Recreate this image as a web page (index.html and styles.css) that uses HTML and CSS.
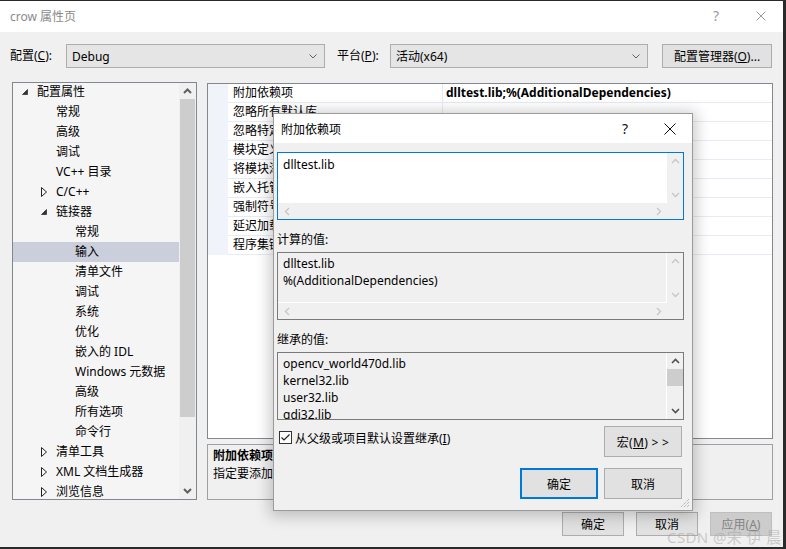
FILE: index.html
```html
<!DOCTYPE html>
<html lang="zh-CN">
<head>
<meta charset="utf-8">
<title>crow 属性页</title>
<link rel="stylesheet" href="styles.css">
</head>
<body>
<div class="window">
  <div class="titlebar">
    <span class="title">crow 属性页</span>
    <span class="tb-btn tb-help">?</span>
    <span class="tb-btn tb-close"><svg width="10" height="10" viewBox="0 0 10 10"><path d="M0.5 0.5L9.5 9.5M9.5 0.5L0.5 9.5" stroke="#9a9a9a" stroke-width="1" fill="none"/></svg></span>
  </div>

  <div class="toolbar">
    <span class="tlabel lbl-config">配置(<u>C</u>):</span>
    <div class="select sel-config"><span class="sel-text">Debug</span><svg class="chev" width="8" height="5" viewBox="0 0 8 5"><path d="M0.5 0.5L4 4L7.5 0.5" stroke="#606060" fill="none"/></svg></div>
    <span class="tlabel lbl-plat">平台(<u>P</u>):</span>
    <div class="select sel-plat"><span class="sel-text">活动(x64)</span><svg class="chev" width="8" height="5" viewBox="0 0 8 5"><path d="M0.5 0.5L4 4L7.5 0.5" stroke="#606060" fill="none"/></svg></div>
    <button class="btn btn-mgr">配置管理器(<u>O</u>)...</button>
  </div>

  <div class="main">
    <div class="tree">
      <div class="tree-list">
        <div class="trow l0"><span class="tw"><svg width="6" height="6" viewBox="0 0 6 6"><path d="M5.5 0.5V5.5H0.5Z" fill="#333" stroke="#333" stroke-width="0.8"/></svg></span>配置属性</div>
        <div class="trow l1"><span class="tw"></span>常规</div>
        <div class="trow l1"><span class="tw"></span>高级</div>
        <div class="trow l1"><span class="tw"></span>调试</div>
        <div class="trow l1"><span class="tw"></span>VC++ 目录</div>
        <div class="trow l1"><span class="tw"><svg width="6" height="10" viewBox="0 0 6 10"><path d="M0.5 0.5L5.5 5L0.5 9.5Z" fill="none" stroke="#222" stroke-width="1"/></svg></span>C/C++</div>
        <div class="trow l1"><span class="tw"><svg width="6" height="6" viewBox="0 0 6 6"><path d="M5.5 0.5V5.5H0.5Z" fill="#333" stroke="#333" stroke-width="0.8"/></svg></span>链接器</div>
        <div class="trow l2"><span class="tw"></span>常规</div>
        <div class="trow l2 selected"><span class="tw"></span>输入</div>
        <div class="trow l2"><span class="tw"></span>清单文件</div>
        <div class="trow l2"><span class="tw"></span>调试</div>
        <div class="trow l2"><span class="tw"></span>系统</div>
        <div class="trow l2"><span class="tw"></span>优化</div>
        <div class="trow l2"><span class="tw"></span>嵌入的 IDL</div>
        <div class="trow l2"><span class="tw"></span>Windows 元数据</div>
        <div class="trow l2"><span class="tw"></span>高级</div>
        <div class="trow l2"><span class="tw"></span>所有选项</div>
        <div class="trow l2"><span class="tw"></span>命令行</div>
        <div class="trow l1"><span class="tw"><svg width="6" height="10" viewBox="0 0 6 10"><path d="M0.5 0.5L5.5 5L0.5 9.5Z" fill="none" stroke="#222" stroke-width="1"/></svg></span>清单工具</div>
        <div class="trow l1"><span class="tw"><svg width="6" height="10" viewBox="0 0 6 10"><path d="M0.5 0.5L5.5 5L0.5 9.5Z" fill="none" stroke="#222" stroke-width="1"/></svg></span>XML 文档生成器</div>
        <div class="trow l1"><span class="tw"><svg width="6" height="10" viewBox="0 0 6 10"><path d="M0.5 0.5L5.5 5L0.5 9.5Z" fill="none" stroke="#222" stroke-width="1"/></svg></span>浏览信息</div>
      </div>
      <div class="tree-scroll">
        <div class="sarrow"><svg width="9" height="6" viewBox="0 0 9 6"><path d="M1 5L4.5 1.5L8 5" stroke="#606060" stroke-width="2" fill="none"/></svg></div>
        <div class="tthumb"></div>
        <div class="strack"></div>
        <div class="sarrow"><svg width="9" height="6" viewBox="0 0 9 6"><path d="M1 1L4.5 4.5L8 1" stroke="#606060" stroke-width="2" fill="none"/></svg></div>
      </div>
    </div>

    <div class="right">
      <div class="grid">
        <div class="prow"><span class="pind"></span><span class="pname">附加依赖项</span><span class="pval bold">dlltest.lib;%(AdditionalDependencies)</span></div>
        <div class="prow"><span class="pind"></span><span class="pname">忽略所有默认库</span><span class="pval"></span></div>
        <div class="prow"><span class="pind"></span><span class="pname">忽略特定默认库</span><span class="pval"></span></div>
        <div class="prow"><span class="pind"></span><span class="pname">模块定义文件</span><span class="pval"></span></div>
        <div class="prow"><span class="pind"></span><span class="pname">将模块添加到程序集</span><span class="pval"></span></div>
        <div class="prow"><span class="pind"></span><span class="pname">嵌入托管资源文件</span><span class="pval"></span></div>
        <div class="prow"><span class="pind"></span><span class="pname">强制符号引用</span><span class="pval"></span></div>
        <div class="prow"><span class="pind"></span><span class="pname">延迟加载的 DLL</span><span class="pval"></span></div>
        <div class="prow"><span class="pind"></span><span class="pname">程序集链接资源</span><span class="pval"></span></div>
      </div>
      <div class="desc">
        <div class="desc-title">附加依赖项</div>
        <div class="desc-text">指定要添加到链接命令行的附加项。[例如 kernel32.lib]</div>
      </div>
    </div>
  </div>

  <div class="footer">
    <button class="btn fbtn">确定</button>
    <button class="btn fbtn">取消</button>
    <button class="btn fbtn disabled">应用(<u>A</u>)</button>
  </div>
</div>

<div class="dialog">
  <div class="dtitlebar">
    <span class="dtitle">附加依赖项</span>
    <span class="dt-btn dt-help">?</span>
    <span class="dt-btn dt-close"><svg width="12" height="12" viewBox="0 0 12 12"><path d="M0.5 0.5L11.5 11.5M11.5 0.5L0.5 11.5" stroke="#111" stroke-width="1" fill="none"/></svg></span>
  </div>
  <div class="dbody">
    <div class="ebox focused">
      <div class="etext">dlltest.lib</div>
      <div class="vbar">
        <span class="arr"><svg width="9" height="6" viewBox="0 0 9 6"><path d="M1 5L4.5 1.5L8 5" stroke="#c6c6c6" stroke-width="1.3" fill="none"/></svg></span>
        <span class="arr"><svg width="9" height="6" viewBox="0 0 9 6"><path d="M1 1L4.5 4.5L8 1" stroke="#c6c6c6" stroke-width="1.3" fill="none"/></svg></span>
      </div>
      <div class="hbar">
        <span class="arr"><svg width="6" height="9" viewBox="0 0 6 9"><path d="M5 1L1.5 4.5L5 8" stroke="#c6c6c6" stroke-width="1.3" fill="none"/></svg></span>
        <span class="arr"><svg width="6" height="9" viewBox="0 0 6 9"><path d="M1 1L4.5 4.5L1 8" stroke="#c6c6c6" stroke-width="1.3" fill="none"/></svg></span>
      </div>
      <div class="corner"></div>
    </div>

    <div class="dlabel">计算的值:</div>
    <div class="ebox readonly">
      <div class="etext"><div>dlltest.lib</div><div>%(AdditionalDependencies)</div></div>
      <div class="vbar">
        <span class="arr"><svg width="9" height="6" viewBox="0 0 9 6"><path d="M1 5L4.5 1.5L8 5" stroke="#c6c6c6" stroke-width="1.3" fill="none"/></svg></span>
        <span class="arr"><svg width="9" height="6" viewBox="0 0 9 6"><path d="M1 1L4.5 4.5L8 1" stroke="#c6c6c6" stroke-width="1.3" fill="none"/></svg></span>
      </div>
      <div class="hbar">
        <span class="arr"><svg width="6" height="9" viewBox="0 0 6 9"><path d="M5 1L1.5 4.5L5 8" stroke="#c6c6c6" stroke-width="1.3" fill="none"/></svg></span>
        <span class="arr"><svg width="6" height="9" viewBox="0 0 6 9"><path d="M1 1L4.5 4.5L1 8" stroke="#c6c6c6" stroke-width="1.3" fill="none"/></svg></span>
      </div>
      <div class="corner"></div>
    </div>

    <div class="dlabel">继承的值:</div>
    <div class="ebox inherit">
      <div class="etext">
        <div>opencv_world470d.lib</div>
        <div>kernel32.lib</div>
        <div>user32.lib</div>
        <div>gdi32.lib</div>
        <div>winspool.lib</div>
      </div>
      <div class="vbar full">
        <span class="arr"><svg width="9" height="6" viewBox="0 0 9 6"><path d="M1 5L4.5 1.5L8 5" stroke="#505050" stroke-width="1.6" fill="none"/></svg></span>
        <span class="ithumb"></span>
        <span class="itrack"></span>
        <span class="arr"><svg width="9" height="6" viewBox="0 0 9 6"><path d="M1 1L4.5 4.5L8 1" stroke="#505050" stroke-width="1.6" fill="none"/></svg></span>
      </div>
    </div>

    <div class="crow">
      <span class="check"><svg width="13" height="13" viewBox="0 0 13 13"><rect x="0.5" y="0.5" width="12" height="12" fill="#fff" stroke="#333"/><path d="M2.5 6.5L5 9L10.5 3.5" stroke="#222" stroke-width="1.2" fill="none"/></svg></span>
      <span class="clabel">从父级或项目默认设置继承(<u>I</u>)</span>
      <button class="btn dbtn macro">宏(<u>M</u>) &gt; &gt;</button>
    </div>

    <div class="brow">
      <button class="btn dbtn primary">确定</button>
      <button class="btn dbtn">取消</button>
    </div>
  </div>
  <svg class="grip" width="10" height="10" viewBox="0 0 10 10"><path d="M9 1L1 9M9 4L4 9M9 7L7 9" stroke="#9a9a9a" stroke-width="1" stroke-dasharray="1 1" fill="none"/></svg>
</div>

<div class="watermark">CSDN @宋 伊 晨</div>
</body>
</html>
```

FILE: styles.css
```css
* { box-sizing: border-box; }
html, body { margin: 0; padding: 0; }
body {
  width: 786px;
  height: 549px;
  background: #2a2a2a;
  font-family: "Noto Sans", "Noto Sans CJK SC", sans-serif;
  font-size: 12px;
  color: #000;
  position: relative;
  overflow: hidden;
}
u { text-decoration: underline; text-underline-offset: 1px; }

.window {
  margin-top: 1px;
  width: 783px;
  height: 546px;
  background: #f0f0f0;
  display: flex;
  flex-direction: column;
}

.titlebar {
  height: 31px;
  flex: none;
  background: #fff;
  display: flex;
  align-items: center;
  padding: 0 0 2px 10px;
  color: #8a8a8a;
}
.title { flex: 1; }
.tb-btn { height: 29px; display: flex; align-items: center; justify-content: center; }
.tb-help { width: 44px; font-size: 14px; color: #9a9a9a; }
.tb-close { width: 45px; }

.toolbar {
  height: 50px;
  flex: none;
  display: flex;
  align-items: flex-start;
  padding: 12px 0 0 10px;
}
.tlabel { height: 24px; line-height: 24px; }
.lbl-config { width: 56px; }
.lbl-plat { width: 53px; margin-left: 12px; }
.select {
  height: 24px;
  background: #e5e5e5;
  border: 1px solid #adadad;
  display: flex;
  align-items: center;
  padding: 0 7px 0 5px;
}
.sel-text { flex: 1; }
.sel-config { width: 259px; }
.sel-plat { width: 258px; }
.btn {
  font-family: inherit;
  font-size: 12px;
  color: #000;
  background: #e1e1e1;
  border: 1px solid #adadad;
  padding: 0;
  margin: 0;
}
.btn-mgr { width: 110px; height: 24px; margin-left: 14px; }

.main {
  height: 418px;
  flex: none;
  display: flex;
  gap: 10px;
  padding: 0 10px 0 12px;
}
.tree {
  width: 185px;
  border: 1px solid #828790;
  background: #f5f5f5;
  display: flex;
}
.tree-list { flex: 1; overflow: hidden; margin-top: -1px; }
.trow {
  height: 20px;
  line-height: 20px;
  display: flex;
  align-items: center;
  white-space: nowrap;
}
.trow.l0 { padding-left: 5px; }
.trow.l1 { padding-left: 24px; }
.trow.l2 { padding-left: 43px; }
.trow.selected { background: #cbcfdc; }
.tw { width: 19px; flex: none; display: flex; align-items: center; padding-left: 4px; }
.tw svg { display: block; }
.tree-scroll {
  width: 17px;
  background: #f0f0f0;
  display: flex;
  flex-direction: column;
}
.sarrow { height: 16px; flex: none; display: flex; align-items: center; justify-content: center; }
.tthumb { height: 318px; flex: none; background: #cdcdcd; margin: 0 1px; }
.strack { flex: 1; }

.right {
  width: 566px;
  display: flex;
  flex-direction: column;
}
.grid {
  margin-top: 1px;
  height: 356px;
  border: 1px solid #828790;
  background: #fff;
}
.prow { height: 19px; display: flex; }
.pind { width: 20px; flex: none; background: #f0f4fa; }
.pname {
  width: 215px;
  flex: none;
  padding-left: 5px;
  line-height: 18px;
  border-bottom: 1px solid #e7ecf4;
  border-right: 1px solid #e7ecf4;
  white-space: nowrap;
  overflow: hidden;
}
.pval {
  flex: 1;
  padding-left: 3px;
  line-height: 18px;
  border-bottom: 1px solid #e7ecf4;
  white-space: nowrap;
}
.bold { font-weight: 700; }
.desc {
  margin-top: 5px;
  height: 56px;
  border: 1px solid #a0a0a0;
  padding: 2px 5px;
}
.desc-title { font-weight: 700; line-height: 18px; }
.desc-text { line-height: 18px; white-space: nowrap; }

.footer {
  margin-top: 12px;
  display: flex;
  justify-content: flex-end;
  gap: 12px;
  padding-right: 11px;
}
.fbtn { width: 62px; height: 24px; }
.fbtn.disabled { background: #cccccc; border-color: #bfbfbf; color: #838383; }

/* dialog overlay */
.dialog {
  position: absolute;
  left: 273px;
  top: 113px;
  width: 420px;
  height: 398px;
  background: #f0f0f0;
  border: 1px solid #9b9b9b;
  box-shadow: 0 2px 14px 3px rgba(0, 0, 0, 0.22);
  display: flex;
  flex-direction: column;
}
.dtitlebar {
  height: 29px;
  flex: none;
  background: #fff;
  display: flex;
  align-items: center;
  padding-left: 7px;
}
.dtitle { flex: 1; }
.dt-btn { height: 29px; display: flex; align-items: center; justify-content: center; }
.dt-help { width: 44px; font-size: 14px; color: #111; }
.dt-close { width: 45px; }
.dbody {
  padding: 9px 8px 0 3px;
  display: flex;
  flex-direction: column;
}
.ebox {
  height: 68px;
  border: 1px solid #7a7a7a;
  display: grid;
  grid-template-columns: 1fr 16px;
  grid-template-rows: 1fr 16px;
  overflow: hidden;
}
.ebox.focused { border-color: #0078d7; background: #fff; }
.ebox.readonly, .ebox.inherit { background: #f0f0f0; }
.ebox.inherit { grid-template-rows: 1fr; }
.etext {
  padding: 2px 5px;
  line-height: 17px;
  overflow: hidden;
  white-space: nowrap;
}
.ebox.focused .etext { padding-top: 3px; }
.ebox.readonly .etext, .ebox.inherit .etext { border-right: 1px solid #fff; }
.ebox.readonly .etext { border-bottom: 1px solid #fff; }
.vbar {
  background: #f0f0f0;
  display: flex;
  flex-direction: column;
  justify-content: space-between;
}
.vbar .arr { height: 16px; display: flex; align-items: center; justify-content: center; }
.vbar.full { justify-content: flex-start; }
.ithumb { height: 17px; flex: none; background: #cdcdcd; }
.itrack { flex: 1; }
.hbar {
  background: #f0f0f0;
  display: flex;
  justify-content: space-between;
}
.hbar .arr { width: 17px; display: flex; align-items: center; justify-content: center; }
.corner { background: #f0f0f0; }

.dlabel {
  height: 32px;
  padding-top: 11px;
  line-height: 17px;
}
.crow {
  margin-top: 6px;
  height: 31px;
  display: flex;
  align-items: flex-start;
}
.check { margin: 5px 0 0 2px; width: 13px; height: 13px; }
.check svg { display: block; }
.clabel { margin: 4px 0 0 3px; line-height: 17px; flex: 1; }
.dbtn { width: 78px; height: 31px; }
.macro { margin-right: 2px; letter-spacing: 0.3px; }
.brow {
  margin-top: 11px;
  display: flex;
  justify-content: flex-end;
  gap: 6px;
  padding-right: 2px;
}
.dbtn.primary { border: 2px solid #0078d7; }
.grip { position: absolute; right: 2px; bottom: 2px; }

.watermark {
  position: absolute;
  left: 667px;
  top: 526px;
  font-size: 15px;
  letter-spacing: 0.4px;
  color: rgba(160, 160, 160, 0.5);
  white-space: nowrap;
}
```
